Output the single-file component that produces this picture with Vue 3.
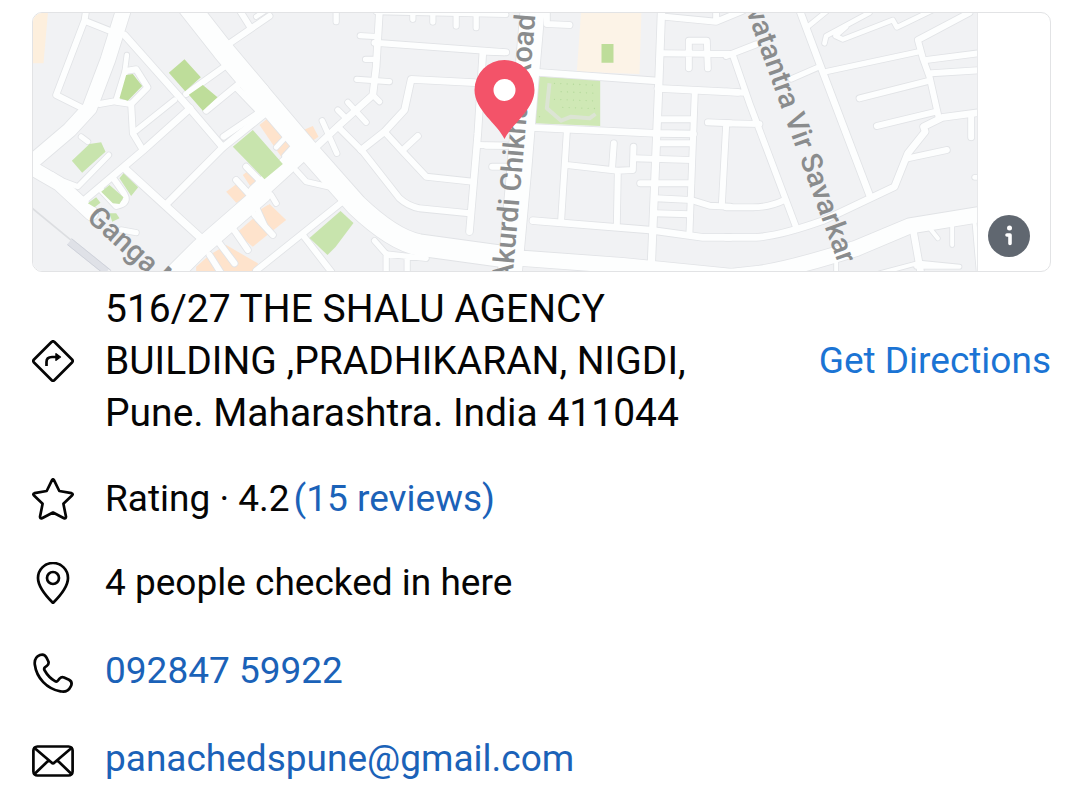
<script setup>
// Each map section is drawn on its own grid, three units to a pixel.
const sections = [
  {
    x: 20,
    roads: [
      [44, 'M312 30L265 180L210 325L150 390L30 492'],
      [42, 'M30 500L120 552L215 640'],
      [18, 'M200 30L195 62L110 285L190 325M195 62L285 98'],
      [20, 'M315 105L510 325L610 442'],
      [14, 'M322 165L316 212'],
      [18, 'M240 312L290 303L318 213L350 208L384 262L335 312L290 305'],
      [18, 'M335 312L340 400L370 450'],
      [16, 'M350 392L465 300'],
      [20, 'M195 600L370 452L512 325'],
      [20, 'M438 615L610 442L750 330'],
      [22, 'M315 505L545 715'],
      [18, 'M620 137L750 48M660 30L690 78'],
      [18, 'M500 282L615 200M560 332L660 250M648 260L715 330M612 410L715 340'],
      [15, 'M135 545L175 560L268 465M185 410L205 425M100 525L125 545'],
      [18, 'M245 570L290 618Q335 610 310 575L285 540'],
      [16, 'M305 690L350 698'],
      [64, 'M500 10L610 150L720 280'],
      [54, 'M450 835L540 745L730 580'],
      [18, 'M650 540L705 600M680 500L730 550M705 645L760 705M640 685L685 750M600 730L645 790M570 765L605 820'],
    ],
  },
  {
    x: 260,
    roads: [
      [20, 'M360 30L350 200L340 285L240 375L160 450'],
      [16, 'M302 107L355 110M318 178L350 178M292 238L390 245M340 285L360 305M265 307L320 367M235 330L260 355M188 362L232 460'],
      [18, 'M345 128L740 157'],
      [20, 'M670 157L655 400L630 695'],
      [20, 'M645 248L455 238L435 330L375 395L305 450'],
      [18, 'M235 380L310 455L420 595Q445 618 480 625L630 640'],
      [18, 'M375 395L430 455L500 530L640 545M430 450L475 408'],
      [18, 'M655 435L740 437M698 500L740 500'],
      [18, 'M-10 812L245 608M130 705L215 815'],
      [16, 'M110 512L140 545L205 560M35 585L50 610M-10 620L15 675'],
      [14, 'M-10 50L20 30M350 36L740 44'],
      [16, 'M230 30V65M460 30V58M520 30V66M590 30V78M650 30V83'],
      [14, 'M50 442L80 410M75 468L105 435M-15 350L10 335'],
      [16, 'M345 722L380 762L500 775M380 760V825M443 770V825'],
      [54, 'M-10 580L130 452'],
      [64, 'M-5 275L135 440L290 615Q400 720 480 735L720 768'],
    ],
  },
  {
    x: 490,
    roads: [
      [20, 'M145 217L505 243M505 265L745 277'],
      [22, 'M516 30L506 300L486 782'],
      [20, 'M135 383L500 400L612 402'],
      [18, 'M232 395L215 660M232 495L385 512L430 510L432 440M373 430L368 500M385 512L382 672'],
      [18, 'M435 475L605 480M452 550H605M505 358H605M505 430H605M500 595L605 600L660 617L722 620M500 640L600 643'],
      [18, 'M616 275L600 695'],
      [20, 'M130 662L480 690L640 712L722 712'],
      [18, 'M655 367L722 370M710 375L697 615'],
      [18, 'M525 50L680 65L760 32M680 30V65M520 160L720 162M598 205V122H652L655 205'],
      [18, 'M172 30V72L240 75M-10 155L42 157M-10 437H60'],
      [72, 'M130 20L112 230L90 500L60 830'],
      [46, 'M-20 762L100 775L400 797L730 830'],
    ],
  },
  {
    x: 730,
    roads: [
      [18, 'M-10 168L80 133M10 165L60 310L200 682M-10 275L45 278M-10 370L90 372'],
      [20, 'M210 30L270 190L420 585'],
      [18, 'M-10 622H70Q120 622 165 600'],
      [20, 'M-10 712H80Q150 708 280 662L495 560L535 460L587 395L582 380L640 352L760 336'],
      [16, 'M185 237L270 200M290 215L570 155'],
      [18, 'M720 38L565 120L580 175L600 230L627 350'],
      [18, 'M590 180L760 158M605 220L760 210M390 295L600 242M442 378L620 335M535 475L652 450M725 345V412'],
      [14, 'M235 80L290 35M285 130L290 108L420 38M318 108L340 118L490 60L502 82L610 30M318 108L350 80M735 532H760'],
      [20, 'M552 695L575 825'],
      [12, 'M605 690L625 715M668 675V735M450 820L570 788L690 800M735 665L748 820M320 760V830M560 800H690'],
      [46, 'M-20 832L90 820Q180 808 380 745L540 678L760 642'],
    ],
  },
]
</script>

<template>
  <main class="place">
    <section class="map-card" aria-label="Map">
      <svg class="map" viewBox="33 13 945 258" preserveAspectRatio="xMidYMid slice" role="img" aria-label="Street map with a pin">
        <rect x="0" y="0" width="1100" height="300" fill="#f1f2f4" />
        <g transform="translate(20 0) scale(0.33333)">
          <path fill="#fdefdd" d="M30 30H86L72 190H30z" />
          <path fill="none" stroke="#dcdee1" stroke-width="5" d="M35 622L160 725L262 815" />
          <path fill="none" stroke="#dfe1e7" stroke-width="24" d="M150 725L262 815" />
          <path fill="none" stroke="#cfd2da" stroke-width="3" d="M156 716L275 812M144 734L245 815" />
          <path fill="#fee3cc" d="M530 800L570 765L620 735L715 790V830H530zM650 700L750 612L800 660L750 700L700 740zM620 575L660 545L685 590L650 608zM670 525L695 505L720 550L700 570zM720 375L745 355L790 410L820 440L785 470z" />
        </g>
        <g transform="translate(260 0) scale(0.33333)">
          <path fill="#fee3cc" d="M132 390L160 378L177 410L155 425zM0 630L25 615L48 650L0 695z" />
        </g>
        <g transform="translate(490 0) scale(0.33333)">
          <path fill="#fcf3e7" d="M275 30H456L450 222L262 215z" />
          <path fill="#bedd9a" d="M336 132H372V188H336z" />
          <path fill="#cfe8b5" d="M150 230L332 240V378L135 370z" />
          <path fill="none" stroke="#b4d99b" stroke-width="4" stroke-linecap="round" stroke-dasharray="0 19" d="M195 250L325 256M215 275L325 280M195 298L325 303M220 322L325 326M150 350L160 352" />
          <path fill="none" stroke="#dce4d4" stroke-width="12" stroke-linejoin="round" d="M180 250L172 325L215 362L245 350L300 355L318 342" />
        </g>
        <g v-for="s in sections" :key="'edge' + s.x" :transform="`translate(${s.x} 0) scale(0.33333)`" class="edge">
          <path v-for="(r, i) in s.roads" :key="i" :d="r[1]" :stroke-width="r[0] + 5" />
        </g>
        <g v-for="s in sections" :key="'road' + s.x" :transform="`translate(${s.x} 0) scale(0.33333)`" class="road">
          <path v-for="(r, i) in s.roads" :key="i" :d="r[1]" :stroke-width="r[0]" />
        </g>
        <g transform="translate(20 0) scale(0.33333)">
          <path fill="#bedd9a" d="M495 178L544 232L497 274L448 218zM550 255L594 292L550 332L508 284zM320 225L340 222L368 258L325 302L300 295z" />
          <path fill="#c8e4ad" d="M157 482L210 432L245 427L258 455L188 518zM640 440L700 390L790 492L735 538zM245 575L270 555L312 592L300 612L280 610zM300 535L312 520L356 562L335 588zM205 610L230 592L243 608L225 622zM270 640H290L300 655L278 665z" />
        </g>
        <path fill="#c8e4ad" d="M310 238L341 211L354 223L336 247L328 255z" />
        <g class="label">
          <text transform="translate(86 219) rotate(42)">Ganga Marg</text>
          <text transform="translate(536 15) rotate(-85)" text-anchor="end">Akurdi Chikhali Road</text>
          <text transform="translate(839 265) rotate(70)" text-anchor="end">Swatantra Vir Savarkar</text>
        </g>
        <path fill="#f35369" d="M505 139C498 124 475 110 475 90A30 30 0 0 1 535 90C535 110 512 124 505 139z" />
        <circle cx="505" cy="90" r="11" fill="#fff" />
      </svg>
      <div class="map-side">
        <button class="info" type="button" aria-label="Map information">
          <svg viewBox="0 0 42 42" aria-hidden="true">
            <circle cx="21.500" cy="13" r="2.500" fill="#fff" />
            <path d="M19 20H22V28.500" fill="none" stroke="#fff" stroke-width="3.600" stroke-linecap="round" stroke-linejoin="round" />
          </svg>
        </button>
      </div>
    </section>

    <section class="row address">
      <svg class="icon" viewBox="0 0 42 42" aria-hidden="true">
        <path d="M19.500 2Q21 .6 22.500 2L40 19.500Q41.400 21 40 22.500L22.500 40Q21 41.400 19.500 40L2 22.500Q.6 21 2 19.500z" />
        <path d="M14.500 26V22Q14.500 17 20 17H25" stroke-linecap="butt" />
        <path d="M24 13.800L28.400 17L24 20.200z" fill="#000" stroke-width="1.500" />
      </svg>
      <address>516/27 THE SHALU AGENCY BUILDING ,PRADHIKARAN, NIGDI, Pune. Maharashtra. India 411044</address>
      <a class="directions" href="#directions">Get Directions</a>
    </section>

    <section class="row">
      <svg class="icon" viewBox="0 0 42 42" aria-hidden="true">
        <path d="M20 2.200Q21 .4 22 2.200L27.300 13L39.500 15.200Q41.600 16 40 17.600L31.400 25.800L34 38.800Q34 41 32 40.200L21 34.500L10 40.200Q8 41 8 38.800L10.600 25.800L2 17.600Q.4 16 2.500 15.200L14.700 13z" />
      </svg>
      <p class="rating"><span>Rating · 4.2</span><a href="#reviews">(15 reviews)</a></p>
    </section>

    <section class="row">
      <svg class="icon" viewBox="0 0 42 42" aria-hidden="true">
        <path d="M21 41C17.500 37.500 6 26 6 16A15 15 0 0 1 36 16C36 26 24.500 37.500 21 41z" />
        <circle cx="21" cy="16" r="6" />
      </svg>
      <p>4 people checked in here</p>
    </section>

    <div class="contacts">
      <section class="row">
        <svg class="icon" viewBox="0 0 42 42" aria-hidden="true">
          <path d="M8 3Q12.500 1.500 14.500 5.700L16.400 9.500Q17.200 12 15 13.700L13 15.300Q11.500 16.800 12.700 18.500C15.500 23.500 18.500 26.500 23 29.200Q24.700 30.300 26 28.500L27.500 26.600Q29.500 24.600 32 25.500L37 27.800Q41 30 38.800 34.300C37 38 33.500 40.400 28.500 39.300C15 37 4.500 26 2.800 12.500Q2 5.500 8 3z" />
        </svg>
        <a href="tel:09284759922">092847 59922</a>
      </section>
      <section class="row">
        <svg class="icon" viewBox="0 0 42 42" aria-hidden="true">
          <rect x="1.400" y="6.500" width="39.200" height="29" rx="4" />
          <path d="M2.500 8L19.500 22.500Q21 24 22.500 22.500L39.500 8M2.500 34L16.500 20.500M39.500 34L25.500 20.500" />
        </svg>
        <a href="mailto:panachedspune@gmail.com">panachedspune@gmail.com</a>
      </section>
    </div>
  </main>
</template>

<style>
body {
  margin: 0;
  background: #fff;
}
</style>

<style scoped>
.place {
  box-sizing: border-box;
  padding: 12px 29px 0 32px;
  font-family: Roboto, sans-serif;
  font-size: 37px;
  line-height: 48px;
  color: #050505;
}
.map-card {
  display: grid;
  grid-template-columns: minmax(0, 1fr) 73px;
  border: 1px solid #e2e3e5;
  border-radius: 10px;
  overflow: hidden;
  margin-bottom: 11px;
}
.map {
  display: block;
  width: 100%;
  height: 258px;
}
.edge path,
.road path {
  fill: none;
  stroke-linecap: round;
  stroke-linejoin: round;
}
.edge path {
  stroke: #e1e3e6;
}
.road path {
  stroke: #fdfefe;
}
.label {
  font-size: 29px;
  font-weight: 500;
  fill: #8a8c8d;
}
.map-side {
  display: flex;
  align-items: flex-end;
  justify-content: flex-end;
  padding: 0 20px 14px 0;
  border-left: 1px solid #e8e9eb;
  box-sizing: border-box;
}
.info {
  width: 42px;
  height: 42px;
  padding: 0;
  border: 0;
  border-radius: 50%;
  background: #606770;
  flex: none;
}
.info svg {
  display: block;
}
.row {
  display: flex;
  align-items: center;
  gap: 31px;
  min-height: 84px;
}
.icon {
  width: 42px;
  height: 42px;
  flex: none;
  fill: none;
  stroke: #050505;
  stroke-width: 2.7;
  stroke-linejoin: round;
  stroke-linecap: round;
}
.address {
  margin-bottom: 18px;
}
address {
  flex: 1;
  max-width: 600px;
  font-style: normal;
  font-size: 39px;
  line-height: 52px;
}
.directions {
  margin-left: auto;
  white-space: nowrap;
  color: #1b74d4;
}
p {
  margin: 0;
}
.rating {
  display: flex;
  flex-wrap: wrap;
  gap: 4px;
}
a {
  color: #1b62b8;
  text-decoration: none;
}
.contacts {
  padding-top: 4px;
}
.contacts .row {
  min-height: 88px;
}
.contacts a {
  padding-bottom: 4px;
}
</style>
